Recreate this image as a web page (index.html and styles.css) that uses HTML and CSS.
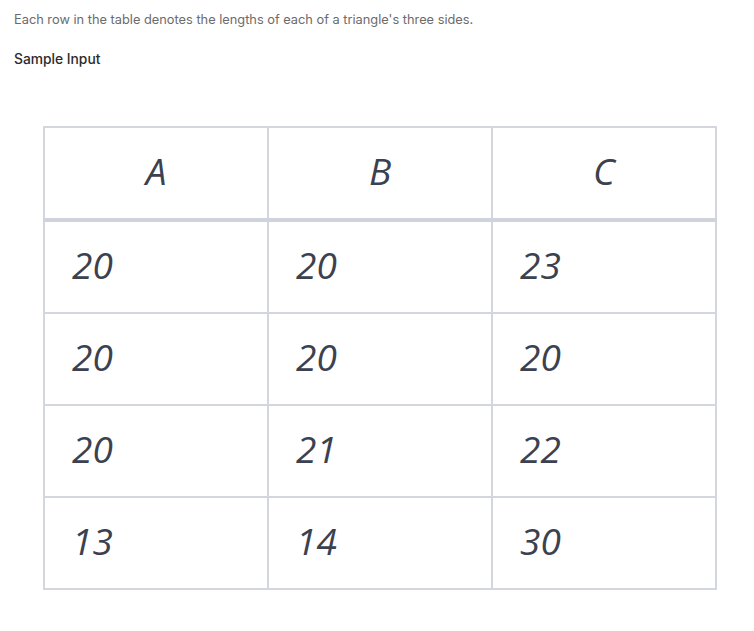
FILE: index.html
```html
<!DOCTYPE html>
<html>
<head>
<meta charset="utf-8">
<link rel="stylesheet" href="styles.css">
</head>
<body>
<p class="desc">Each row in the table denotes the lengths of each of a triangle's three sides.</p>
<p class="label">Sample Input</p>
<table class="grid">
  <thead>
    <tr><th>A</th><th>B</th><th>C</th></tr>
  </thead>
  <tbody>
    <tr><td>20</td><td>20</td><td>23</td></tr>
    <tr><td>20</td><td>20</td><td>20</td></tr>
    <tr><td>20</td><td>21</td><td>22</td></tr>
    <tr><td>13</td><td>14</td><td>30</td></tr>
  </tbody>
</table>
</body>
</html>
```
FILE: styles.css
```css
html, body {
  margin: 0;
  background: #ffffff;
}
body {
  padding: 12px 14px;
  font-family: Inter, "Noto Sans", sans-serif;
}
.desc {
  margin: 0;
  font-size: 12.8px;
  line-height: 16px;
  color: #6b6b6b;
}
.label {
  margin: 23px 0 0;
  font-size: 13.8px;
  line-height: 16px;
  font-weight: 500;
  color: #2b2b2b;
}
.grid {
  margin: 59px 0 0 29px;
  width: 674px;
  table-layout: fixed;
  border-collapse: collapse;
  font-family: "Open Sans", sans-serif;
  font-style: italic;
  font-size: 37px;
  color: #3b414f;
}
.grid th, .grid td {
  border: 2px solid #d3d6de;
  padding: 0 0 6px;
}
.grid th {
  height: 84px;
  font-weight: 400;
  text-align: center;
  border-bottom: 4px solid #cfd3dc;
}
.grid td {
  height: 84px;
  text-align: left;
  padding-left: 27px;
}
```
